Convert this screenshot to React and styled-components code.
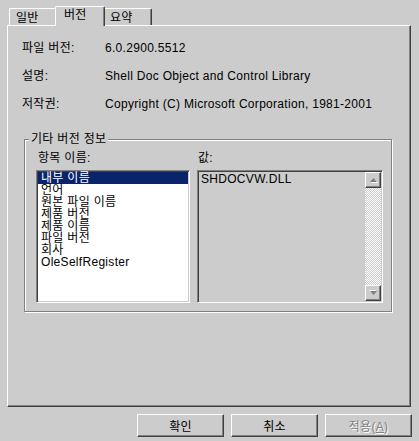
import React from 'react';
import styled, { createGlobalStyle } from 'styled-components';

const FONT = `"Liberation Sans", "Noto Sans CJK KR", sans-serif`;

const GlobalStyle = createGlobalStyle`
  html, body {
    margin: 0;
    padding: 0;
    background: #cccccc;
  }
  * {
    box-sizing: border-box;
  }
`;

const Dialog = styled.div`
  width: 419px;
  height: 441px;
  background: #cccccc;
  padding: 6px 8px 0 7px;
  display: flex;
  flex-direction: column;
  font-family: ${FONT};
  font-size: 12px;
  letter-spacing: 0.3px;
  color: #000;
`;

const TabStrip = styled.div`
  display: flex;
  align-items: flex-end;
  height: 19px;
  padding-left: 2px;
  position: relative;
  z-index: 1;
`;

const Tab = styled.div`
  position: relative;
  z-index: ${props => props.active ? 2 : 1};
  width: ${props => props.w}px;
  height: ${props => props.active ? 20 : 17}px;
  margin: ${props => props.active ? '0 -2px -1px -2px' : '0'};
  padding: ${props => props.active ? '2px 0 0 8px' : '3px 0 0 6px'};
  background: #cccccc;
  border-top: 1px solid #fff;
  border-left: 1px solid #fff;
  border-right: 1px solid #404040;
  border-radius: 2px 2px 0 0;
  box-shadow: inset -1px 0 0 #808080;
  line-height: 12px;
  white-space: nowrap;
`;

const Panel = styled.div`
  height: 382px;
  border: 1px solid;
  border-color: #fff #404040 #404040 #fff;
  box-shadow: inset -1px -1px 0 #808080;
  padding: 8px 0 0 14px;
`;

const InfoGrid = styled.div`
  display: grid;
  grid-template-columns: 83px auto;
  grid-auto-rows: 28px;
  align-items: center;
  line-height: 12px;
`;

const GroupBox = styled.fieldset`
  width: 368px;
  margin: 15px 0 0 2px;
  padding: 7px 8px 8px 11px;
  border: 1px solid #808080;
  box-shadow: inset 1px 1px 0 #fff, 1px 1px 0 #fff;
  min-width: 0;
`;

const Caption = styled.legend`
  margin-left: -7px;
  padding: 0 2px;
  background: #cccccc;
  line-height: 12px;
`;

const Columns = styled.div`
  display: flex;
  gap: 7px;
`;

const Column = styled.div`
  width: ${props => props.w}px;
  display: flex;
  flex-direction: column;
`;

const FieldLabel = styled.div`
  line-height: 12px;
  padding-left: ${props => props.indent}px;
  margin-bottom: 6px;
`;

const Sunken = styled.div`
  height: 133px;
  border: 1px solid;
  border-color: #808080 #fff #fff #808080;
  box-shadow: inset 1px 1px 0 #404040, inset -1px -1px 0 #cccccc;
  padding: 1px;
  background: ${props => props.bg};
  display: flex;
`;

const ItemList = styled.div`
  flex: 1;
  display: flex;
  flex-direction: column;
`;

const Item = styled.div`
  height: 12px;
  line-height: 12px;
  padding-left: 3px;
  white-space: nowrap;
  background: ${props => props.selected ? '#0a246a' : 'transparent'};
  color: ${props => props.selected ? '#fff' : '#000'};
`;

const ValueText = styled.div`
  flex: 1;
  padding: 1px 0 0 2px;
  line-height: 12px;
`;

const ScrollBar = styled.div`
  width: 16px;
  display: flex;
  flex-direction: column;
`;

const ScrollButton = styled.div`
  width: 16px;
  height: 16px;
  background: #cccccc;
  border: 1px solid;
  border-color: #fff #404040 #404040 #fff;
  box-shadow: inset -1px -1px 0 #808080;
  display: flex;
  align-items: center;
  justify-content: center;
`;

const Track = styled.div`
  flex: 1;
  background-image: repeating-conic-gradient(#ffffff 0 25%, #cccccc 0 50%);
  background-size: 2px 2px;
`;

const ButtonRow = styled.div`
  display: flex;
  justify-content: flex-end;
  gap: 7px;
  margin: 7px -1px 0 0;
`;

const Button = styled.button`
  width: 87px;
  height: 23px;
  padding: 0;
  background: #cccccc;
  border: 1px solid;
  border-color: #fff #404040 #404040 #fff;
  box-shadow: inset -1px -1px 0 #808080;
  font-family: ${FONT};
  font-size: 12px;
  letter-spacing: 0.3px;
  color: ${props => props.disabled ? '#808080' : '#000'};
  text-shadow: ${props => props.disabled ? '1px 1px 0 #fff' : 'none'};
`;

const Arrow = ({ down }) => (
  <svg width="9" height="6" viewBox="0 0 9 6">
    <g transform={down ? 'rotate(180 4.5 3)' : undefined}>
      <polygon points="4.5,1 8,5 1,5" fill="#fff" transform="translate(1 1)" />
      <polygon points="4.5,1 8,5 1,5" fill="#808080" />
    </g>
  </svg>
);

const items = [
  '내부 이름',
  '언어',
  '원본 파일 이름',
  '제품 버전',
  '제품 이름',
  '파일 버전',
  '회사',
  'OleSelfRegister',
];

const info = [
  ['파일 버전:', '6.0.2900.5512'],
  ['설명:', 'Shell Doc Object and Control Library'],
  ['저작권:', 'Copyright (C) Microsoft Corporation, 1981-2001'],
];

const App = () => (
  <Dialog>
    <GlobalStyle />
    <TabStrip>
      <Tab w={48}>일반</Tab>
      <Tab w={50} active>버전</Tab>
      <Tab w={49}>요약</Tab>
    </TabStrip>
    <Panel>
      <InfoGrid>
        {info.map(([label, value]) => (
          <React.Fragment key={label}>
            <div>{label}</div>
            <div>{value}</div>
          </React.Fragment>
        ))}
      </InfoGrid>
      <GroupBox>
        <Caption>기타 버전 정보</Caption>
        <Columns>
          <Column w={154}>
            <FieldLabel indent={2}>항목 이름:</FieldLabel>
            <Sunken bg="#fff">
              <ItemList>
                {items.map((item, i) => (
                  <Item key={item} selected={i === 0}>{item}</Item>
                ))}
              </ItemList>
            </Sunken>
          </Column>
          <Column w={186}>
            <FieldLabel indent={1}>값:</FieldLabel>
            <Sunken bg="#cccccc">
              <ValueText>SHDOCVW.DLL</ValueText>
              <ScrollBar>
                <ScrollButton><Arrow /></ScrollButton>
                <Track />
                <ScrollButton><Arrow down /></ScrollButton>
              </ScrollBar>
            </Sunken>
          </Column>
        </Columns>
      </GroupBox>
    </Panel>
    <ButtonRow>
      <Button>확인</Button>
      <Button>취소</Button>
      <Button disabled>적용(<u>A</u>)</Button>
    </ButtonRow>
  </Dialog>
);

export default App;
